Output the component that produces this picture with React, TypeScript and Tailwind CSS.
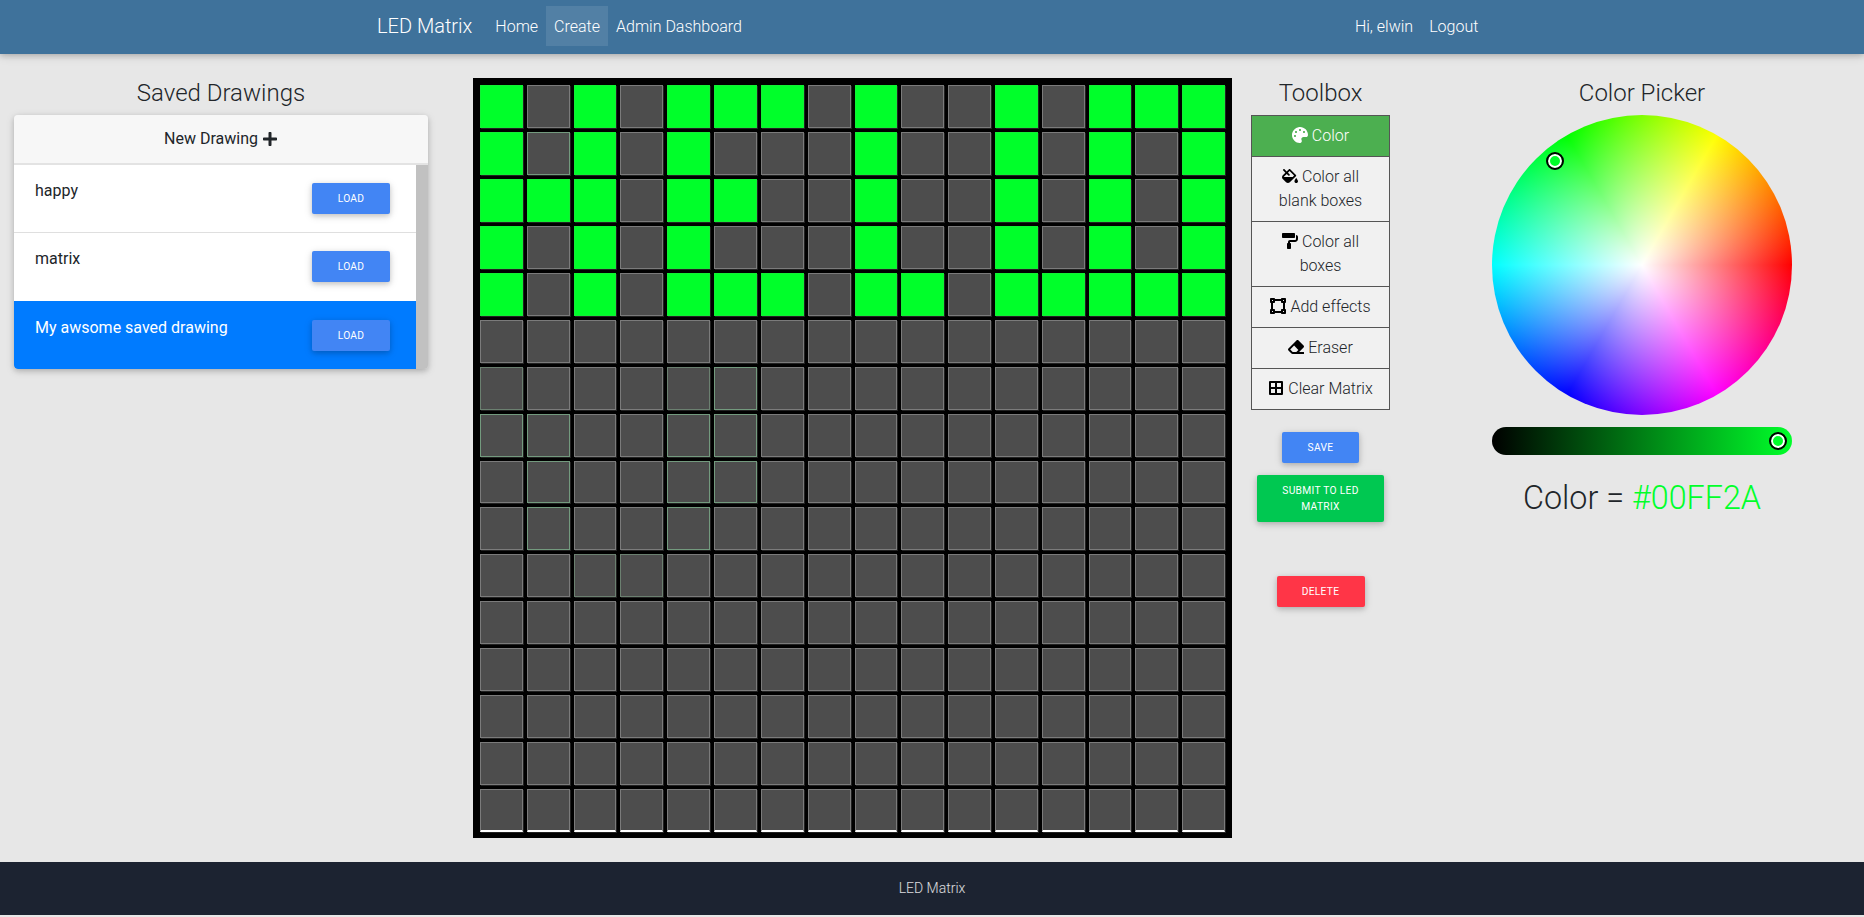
import React from "react";
import {
  FaBorderAll,
  FaEraser,
  FaFillDrip,
  FaPaintRoller,
  FaPalette,
  FaPlus,
  FaVectorSquare,
} from "react-icons/fa";

const ON_ROWS = [
  "1010111010010111",
  "1010100010010101",
  "1110110010010101",
  "1010100010010101",
  "1010111011011111",
];

// cells that were painted before, they keep a faint green edge
const TINTED = new Set(["1-1", "6-5", "7-0", "7-1", "7-4", "7-5", "8-1", "8-4", "8-5", "9-1", "9-4"]);
const FAINT = new Set(["6-0", "6-4", "10-2", "10-3"]);

const shadow = "shadow-[0_2px_5px_rgba(0,0,0,0.16),0_2px_10px_rgba(0,0,0,0.12)]";

const drawings = [
  { name: "happy", active: false, cls: "h-[68px] pt-[18px] border-b border-[#dfdfdf]" },
  { name: "matrix", active: false, cls: "h-[68px] pt-[18px]" },
  { name: "My awsome saved drawing", active: true, cls: "h-[68px] pt-[19px]" },
];

function Cell({ row, col }: { row: number; col: number }) {
  const key = row + "-" + col;
  const on = row < 5 && ON_ROWS[row][col] === "1";
  let cls = "bg-[#4d4d4d] border-[#7b7b7b]";
  if (on) cls = "bg-[#00ff2a] border-[#12f035]";
  else if (TINTED.has(key)) cls = "bg-[#4d4d4d] border-[#739a7e]";
  else if (FAINT.has(key)) cls = "bg-[#4d4d4d] border-[#6b8070]";
  return (
    <div
      className={
        "m-[2px] h-[42.95px] border shadow-[1px_1px_0_#222] " +
        cls +
        (row === 15 ? " border-b-2 border-b-white" : "")
      }
    />
  );
}

function Matrix() {
  const cells = [];
  for (let r = 0; r < 16; r++) {
    for (let c = 0; c < 16; c++) {
      cells.push(<Cell key={r + "-" + c} row={r} col={c} />);
    }
  }
  return (
    <div className="ml-[45px] h-[760px] w-[759px] bg-black px-[5px] py-[5px]">
      <div className="grid grid-cols-16">{cells}</div>
    </div>
  );
}

function Tool({
  icon,
  children,
  active,
  last,
}: {
  icon: React.ReactNode;
  children: React.ReactNode;
  active?: boolean;
  last?: boolean;
}) {
  return (
    <div
      className={
        "border-x border-t border-[#555] px-3 py-2 text-center leading-6 " +
        (last ? "border-b " : "") +
        (active ? "bg-[#4caf50] text-white" : "bg-[#f1f1f1] text-[#212529]")
      }
    >
      <span className={"mr-1 inline-block align-[-2px] " + (active ? "text-white" : "text-black")}>{icon}</span>
      {children}
    </div>
  );
}

function Handle({ className }: { className: string }) {
  return (
    <div
      className={
        "absolute h-[18px] w-[18px] rounded-full border-2 border-black bg-[#00ff2a] shadow-[inset_0_0_0_2px_#fff] " +
        className
      }
    />
  );
}

export default function App() {
  return (
    <div className="flex min-h-[917px] flex-col bg-[#e7e7e7] font-['Roboto',sans-serif] font-light text-[#212529]">
      <nav className={"z-10 flex h-[54px] items-center bg-[#3f729b] pb-[2px] pl-[377px] text-white " + shadow}>
        <span className="text-[20px] font-light">LED Matrix</span>
        <div className="ml-[15px] flex text-[16px]">
          <a className="flex h-[40px] items-center px-2 pt-[1px]">Home</a>
          <a className="flex h-[40px] items-center bg-white/10 px-2 pt-[1px]">Create</a>
          <a className="flex h-[40px] items-center px-2 pt-[1px]">Admin Dashboard</a>
        </div>
        <div className="ml-[597px] flex text-[16px]">
          <a className="flex h-[40px] items-center px-2 pt-[1px]">Hi, elwin</a>
          <a className="flex h-[40px] items-center px-2 pt-[1px]">Logout</a>
        </div>
      </nav>

      <main className="flex h-[808px] pt-[24px]">
        <section className="ml-[14px] w-[414px]">
          <h4 className="mb-[7px] text-center text-[24px] leading-[30px] font-light">Saved Drawings</h4>
          <div className={"overflow-hidden rounded-[4px] " + shadow}>
            <div className="flex h-[50px] items-center justify-center border-b-2 border-[#e3e3e3] bg-[#f7f7f7] text-[16px] font-normal">
              New Drawing
              <FaPlus className="ml-1 text-[16px] text-[#212529]" />
            </div>
            <div className="flex bg-[#c1c1c1]">
              <div className="w-[402px]">
                {drawings.map((d) => (
                  <div
                    key={d.name}
                    className={
                      "flex justify-between pr-[26px] pl-[21px] font-normal " +
                      d.cls +
                      (d.active ? " rounded-bl-[4px] bg-[#007bff] text-white" : " bg-white text-[#212529]")
                    }
                  >
                    <span className="-mt-[1px] text-[16px] leading-[17px]">{d.name}</span>
                    <button className={"h-[31px] w-[78px] rounded-[2px] bg-[#4285f4] text-[10.24px] tracking-[0.3px] text-white uppercase " + shadow}>
                      Load
                    </button>
                  </div>
                ))}
              </div>
            </div>
          </div>
        </section>

        <Matrix />

        <section className="ml-[19px] w-[139px]">
          <h4 className="mb-[7px] text-center text-[24px] leading-[30px] font-light">Toolbox</h4>
          <Tool icon={<FaPalette className="text-[16px]" />} active>
            Color
          </Tool>
          <Tool icon={<FaFillDrip className="text-[16px]" />}>Color all blank boxes</Tool>
          <Tool icon={<FaPaintRoller className="text-[16px]" />}>Color all boxes</Tool>
          <Tool icon={<FaVectorSquare className="text-[16px]" />}>Add effects</Tool>
          <Tool icon={<FaEraser className="text-[16px]" />}>Eraser</Tool>
          <Tool icon={<FaBorderAll className="text-[16px]" />} last>
            Clear Matrix
          </Tool>
          <div className="mt-[22px] flex flex-col items-center font-normal text-white">
            <button className={"h-[31px] w-[77px] rounded-[2px] bg-[#4285f4] text-[10.24px] tracking-[0.3px] uppercase " + shadow}>
              Save
            </button>
            <button className={"mt-[12px] h-[47px] w-[127px] rounded-[2px] bg-[#00c851] px-5 text-[10.24px] leading-4 tracking-[0.3px] uppercase " + shadow}>
              Submit to LED Matrix
            </button>
            <button className={"mt-[54px] h-[31px] w-[88px] rounded-[2px] bg-[#ff3547] text-[10.24px] tracking-[0.3px] uppercase " + shadow}>
              Delete
            </button>
          </div>
        </section>

        <section className="ml-[102px] w-[300px]">
          <h4 className="mb-[7px] text-center text-[24px] leading-[30px] font-light">Color Picker</h4>
          <div className="relative h-[300px] w-[300px] rounded-full bg-[radial-gradient(circle_closest-side,#fff_0%,rgba(255,255,255,0)_100%),conic-gradient(from_90deg,#f00,#f0f,#00f,#0ff,#0f0,#ff0,#f00)]">
            <Handle className="top-[37px] left-[54px]" />
          </div>
          <div className="relative mt-[12px] h-[28px] rounded-full bg-[linear-gradient(to_right,#000,#00ff2a)]">
            <Handle className="top-[5px] right-[5px]" />
          </div>
          <p className="mt-[24px] text-center text-[32.3px] leading-[38px] font-light">
            Color = <span className="text-[#00ff2a]">#00FF2A</span>
          </p>
        </section>
      </main>

      <footer className="flex h-[53px] items-center justify-center bg-[#1c2331] text-[14px] text-white/85">
        LED Matrix
      </footer>
    </div>
  );
}
